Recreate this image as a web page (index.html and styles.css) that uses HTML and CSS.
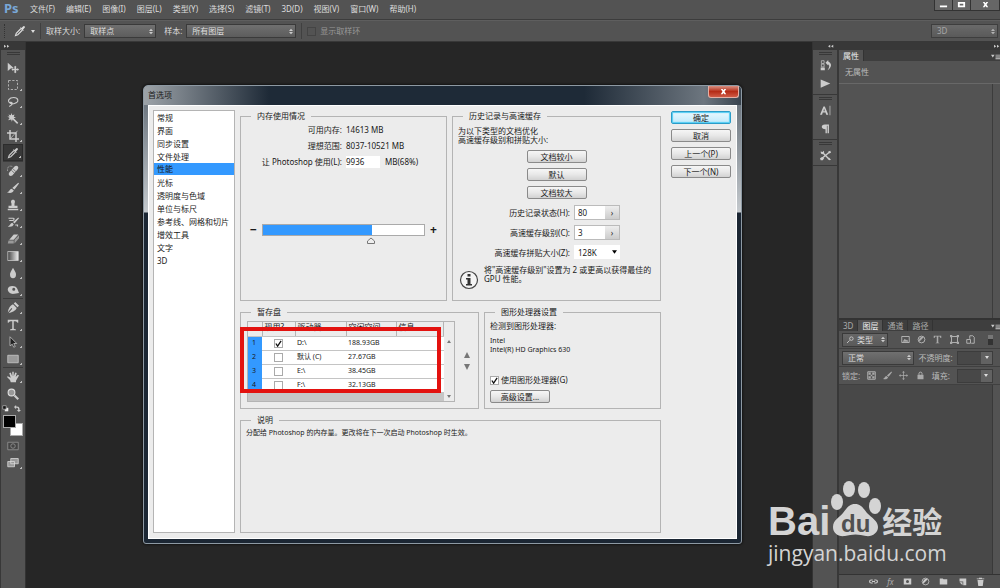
FILE: index.html
```html
<!DOCTYPE html>
<html lang="zh-CN">
<head>
  <meta charset="utf-8">
  <meta name="viewport" content="width=device-width, initial-scale=1">
  <title>首选项</title>
  <link rel="stylesheet" href="styles.css">
</head>
<body>
  <header class="menubar">
    <span class="logo">Ps</span>
    <nav class="menu">
      <a href="#">文件(F)</a>
      <a href="#">编辑(E)</a>
      <a href="#">图像(I)</a>
      <a href="#">图层(L)</a>
      <a href="#">类型(Y)</a>
      <a href="#">选择(S)</a>
      <a href="#">滤镜(T)</a>
      <a href="#">3D(D)</a>
      <a href="#">视图(V)</a>
      <a href="#">窗口(W)</a>
      <a href="#">帮助(H)</a>
    </nav>
    <div class="window-buttons">
      <button aria-label="最小化"><svg viewBox="0 0 10 8"><path d="M1 5h8v2H1z"/></svg></button>
      <button aria-label="最大化"><svg viewBox="0 0 10 8"><path fill-rule="evenodd" d="M1 1h8v6H1zM3 3v2h4V3z"/></svg></button>
      <button class="wide" aria-label="关闭"><svg viewBox="0 0 10 8"><path d="M2 1h2l1 1.500L6 1h2L6.200 4 8 7H6L5 5.500 4 7H2l1.800-3z"/></svg></button>
    </div>
  </header>

  <div class="options">
    <span class="handle"></span>
    <svg class="option-icon" viewBox="0 0 16 16"><path fill="none" stroke="#ddd" stroke-width="1.500" d="M9 5L3 11l-1 3 3-1 6-6"/><path fill="#ddd" d="M8 4l4 4 1-1-1-1 2-2c2-2-1-4-2-2l-2 2-1-1z"/></svg>
    <span class="caret"></span>
    <span class="divider"></span>
    <label for="sample-size">取样大小:</label>
    <select id="sample-size" class="dark-select size"><option>取样点</option></select>
    <label for="sample">样本:</label>
    <select id="sample" class="dark-select sample"><option>所有图层</option></select>
    <span class="divider"></span>
    <label class="ring"><input type="checkbox" disabled>显示取样环</label>
    <select class="dark-select space" aria-label="工作区"><option>3D</option></select>
  </div>

  <div class="workspace">
    <aside class="toolbar">
      <div class="strip"><svg viewBox="0 0 8 6"><path d="M0 1l3 2-3 2zM4 1l3 2-3 2z"/></svg></div>
      <div class="grip"></div>
      <button class="tool plain" aria-label="移动"><svg viewBox="0 0 16 16"><path d="M1 1l8 7-4 .500L1 12z"/><path d="M11 5l2 2h-1v2h2V8l2 2-2 2v-1h-2v2h1l-2 2-2-2h1v-2H8v1l-2-2 2-2v1h2V7H9z"/></svg></button>
      <button class="tool" aria-label="选框"><svg viewBox="0 0 16 16"><path class="line" stroke-dasharray="3 2" d="M2 2h12v12H2z"/></svg></button>
      <button class="tool" aria-label="套索"><svg viewBox="0 0 16 16"><path class="line" stroke-width="1.500" d="M5 10C-1 7 3 2 9 2s8 6 1 8c-3 1-6 0-6-1s3-1 3 1-2 3-4 4"/></svg></button>
      <button class="tool" aria-label="魔棒"><svg viewBox="0 0 16 16"><path d="M6 0l1 3 3-1-1 3 3 1-3 1 6 6-1.500 1.500-6-6-1 3-1-3-4 1 2-3-3-2h3L2 2l3 1z"/></svg></button>
      <button class="tool" aria-label="裁剪"><svg viewBox="0 0 16 16"><path class="line" stroke-width="2" d="M4 0v12h12M0 4h12v12"/><path class="line" d="M4 12l10-11"/></svg></button>
      <button class="tool active" aria-label="吸管"><svg viewBox="0 0 16 16"><path class="line" stroke-width="1.500" d="M9 5L3 11l-1 3 3-1 6-6"/><path d="M8 4l4 4 1-1-1-1 2-2c2-2-1-4-2-2l-2 2-1-1z"/></svg></button>
      <hr>
      <button class="tool" aria-label="修复画笔"><svg viewBox="0 0 16 16"><path d="M10 2c3-3 7 1 4 4l-7 8c-3 2-6-1-4-4z"/><path class="line" stroke-dasharray="1 1" d="M7 2C1 0 0 5 1 9"/><path stroke="#555" d="M6 7l4 4M8 5l4 4"/></svg></button>
      <button class="tool" aria-label="画笔"><svg viewBox="0 0 16 16"><path d="M15 1l1 1-6 8-3-2zM6 9l3 2c-1 4-5 4-9 3 3-1 3-4 6-5z"/></svg></button>
      <button class="tool" aria-label="图章"><svg viewBox="0 0 16 16"><path d="M8 1c3 0 3 3 2 5v3h4v3H2V9h4V6C5 4 5 1 8 1zM1 13h14v2H1z"/></svg></button>
      <button class="tool" aria-label="历史画笔"><svg viewBox="0 0 16 16"><path d="M15 2l1 1-6 7-2-2zM7 9l2 2c-1 3-4 4-8 3 3-1 3-4 6-5z"/><path class="line" stroke-width="1.500" d="M2 3h6c2 0 2 2 0 3H3M11 12h3v2"/></svg></button>
      <button class="tool" aria-label="橡皮擦"><svg viewBox="0 0 16 16"><path d="M9 2h6L9 9H3z"/><path fill="#999" d="M2 10h7v4H1zM10 9l6-6v4l-6 7z"/></svg></button>
      <button class="tool" aria-label="渐变"><svg viewBox="0 0 16 16"><defs><linearGradient id="ramp"><stop offset="0" stop-color="#444"/><stop offset="1" stop-color="#eee"/></linearGradient></defs><path fill="url(#ramp)" stroke="#ccc" d="M1 2h14v12H1z"/></svg></button>
      <button class="tool" aria-label="模糊"><svg viewBox="0 0 16 16"><path d="M8 1c3 5 4 7 4 9a4 5 0 0 1-8 0c0-2 1-4 4-9z"/></svg></button>
      <button class="tool" aria-label="减淡"><svg viewBox="0 0 16 16"><path fill-rule="evenodd" d="M1 7c0-6 12-6 13 0l2 5-6 1c-5 1-9-2-9-6zm6 0a2 2 0 1 0 4 0 2 2 0 0 0-4 0z"/></svg></button>
      <hr>
      <button class="tool" aria-label="钢笔"><svg viewBox="0 0 16 16"><path d="M11 0l5 5-2 2-5-5zM8 3l5 5c-2 4-5 5-11 7l5-6-1-1-5 6C2 8 4 5 8 3z"/></svg></button>
      <button class="tool" aria-label="文字"><svg viewBox="0 0 16 16"><path d="M1 1h14v4h-1c-1-2-2-2-5-2v10l3 1v1H4v-1l3-1V3c-3 0-4 0-5 2H1z"/></svg></button>
      <button class="tool" aria-label="路径选择"><svg viewBox="0 0 16 16"><path fill="#222" stroke="#ccc" d="M4 1l9 9H9l2 4-2 1-2-4-3 2z"/></svg></button>
      <button class="tool" aria-label="矩形"><svg viewBox="0 0 16 16"><path fill="#999" stroke="#ccc" d="M1 3h14v10H1z"/></svg></button>
      <hr>
      <button class="tool" aria-label="抓手"><svg viewBox="0 0 16 16"><path d="M3 3l2-1 2 5V1h2v6l2-5 2 .500L11.500 8l3-3 1.500 1-4 7v2H5l-1-3-4-4 1-1 4 2z"/></svg></button>
      <button class="tool plain" aria-label="缩放"><svg viewBox="0 0 16 16"><circle cx="6" cy="6" r="4.500" fill="#999" stroke="#ddd" stroke-width="1.500"/><path d="M9 11l2-2 5 5-2 2z"/></svg></button>
      <div class="mini">
        <svg viewBox="0 0 10 10"><path fill="#eee" d="M4 4h5v5H4z"/><path fill="#111" stroke="#bbb" d="M1 1h5v5H1z"/></svg>
        <svg viewBox="0 0 10 10"><path d="M0 3l3-3v2c4 0 5 1 5 5h2l-3 3-3-3h2c0-3-1-3-3-3v2z"/></svg>
      </div>
      <div class="swatches">
        <span class="back"></span>
        <span class="fore"></span>
      </div>
      <button class="tool plain" aria-label="快速蒙版"><svg viewBox="0 0 16 16"><path fill="#444" stroke="#999" d="M1 3h14v10H1z"/><circle cx="8" cy="8" r="3" fill="none" stroke="#999"/></svg></button>
      <button class="tool" aria-label="屏幕模式"><svg viewBox="0 0 16 16"><path fill="#999" stroke="#ddd" d="M5 2h10v7H5zM1 6h9v7H1z"/></svg></button>
    </aside>

    <main class="canvas"></main>

    <aside class="dock">
      <div class="strip right"><svg viewBox="0 0 8 6"><path d="M3 1v4L0 3zM7 1v4L4 3z"/></svg></div>
      <div class="dock-group">
        <div class="grip"></div>
        <button aria-label="历史记录"><svg viewBox="0 0 16 16"><path class="line" d="M2 1h4v4H2zM2 6h4v4H2z"/><path d="M1 11h6v4H1zM8 4l4-4v2c6 3 5 9-1 13 3-5 3-8 1-9v2z"/></svg></button>
        <button aria-label="动作"><svg viewBox="0 0 16 16"><path d="M1 2l14 6-14 6z"/></svg></button>
      </div>
      <div class="dock-group">
        <div class="grip"></div>
        <button aria-label="字符"><svg viewBox="0 0 16 16"><path fill-rule="evenodd" d="M0 14L5 2h2l5 12H9l-1-3H4l-1 3zM5 9h2L6 5zM14 1h1v14h-1z"/></svg></button>
        <button aria-label="段落"><svg viewBox="0 0 16 16"><path d="M7 2h6v13h-2V4h-1v11H8V9C1 9 1 2 7 2z"/></svg></button>
      </div>
      <div class="dock-group last">
        <div class="grip"></div>
        <button aria-label="工具预设"><svg viewBox="0 0 16 16"><path class="line" stroke-width="2" d="M4 4l9 9M14 3L3 12"/><path d="M1 2l3 1 1-2c2 2 1 5-1 5S1 5 1 2zM12 2l3-1 1 3-3 1zM0 12l3-2 3 2-2 3H1zM11 13l2-2 3 3-2 1z"/></svg></button>
      </div>
    </aside>

    <aside class="panels">
      <div class="strip right"><svg viewBox="0 0 8 6"><path d="M0 1l3 2-3 2zM4 1l3 2-3 2z"/></svg></div>
      <section class="properties">
        <div class="tabs">
          <button class="current">属性</button>
          <svg class="panel-menu" viewBox="0 0 10 6"><path d="M0 1h4L2 4zM5 1h5v1H5zM5 3h5v1H5zM5 5h5v1H5z"/></svg>
        </div>
        <p class="empty">无属性</p>
        <div class="panel-body"></div>
      </section>
      <section class="layers">
        <div class="tabs">
          <button>3D</button>
          <button class="current">图层</button>
          <button>通道</button>
          <button>路径</button>
          <svg class="panel-menu" viewBox="0 0 10 6"><path d="M0 1h4L2 4zM5 1h5v1H5zM5 3h5v1H5zM5 5h5v1H5z"/></svg>
        </div>
        <div class="layer-row filter">
          <select class="dark-select kind" aria-label="过滤"><option>类型</option></select>
          <svg viewBox="0 0 12 12"><path class="line" d="M1 2h10v8H1z"/><path d="M2 9l3-4 2 2 1-1 2 3z"/></svg>
          <svg viewBox="0 0 12 12"><circle class="line" cx="6" cy="6" r="4.500"/><path d="M9 3a4.500 4.500 0 0 0-6 6z"/></svg>
          <svg viewBox="0 0 12 12"><path d="M1 1h10v3h-1L9 2H7v8l2 1H3l2-1V2H3L2 4H1z"/></svg>
          <svg viewBox="0 0 12 12"><path class="line" d="M2 2h8v8H2z"/><path d="M0 0h3v3H0zM9 0h3v3H9zM0 9h3v3H0zM9 9h3v3H9z"/></svg>
          <svg viewBox="0 0 12 12"><path class="line" d="M5 5V1h4l2 2v8H7M1 6h5v5H1z"/></svg>
          <span class="toggle"></span>
        </div>
        <div class="layer-row">
          <select class="dark-select blend" aria-label="混合模式"><option>正常</option></select>
          <label for="opacity">不透明度:</label>
          <span class="amount"><input id="opacity" type="text"><button aria-label="不透明度选项"><i class="caret"></i></button></span>
        </div>
        <div class="layer-row lock">
          <span>锁定:</span>
          <svg viewBox="0 0 12 12"><path class="line" d="M1 1h10v10H1z"/><path d="M2 2h3v3H2zM7 2h3v3H7zM5 5h2v2H5zM2 7h3v3H2zM7 7h3v3H7z"/></svg>
          <svg viewBox="0 0 16 16"><path d="M15 1l1 1-6 8-3-2zM6 9l3 2c-1 4-5 4-9 3 3-1 3-4 6-5z"/></svg>
          <svg viewBox="0 0 12 12"><path d="M6 0l2 2H6.500v3.500H10V4l2 2-2 2V6.500H6.500V10H8l-2 2-2-2h1.500V6.500H2V8L0 6l2-2v1.500h3.500V2H4z"/></svg>
          <svg viewBox="0 0 12 12"><path d="M2 5h8v6H2z"/><path class="line" d="M4 5V3c0-2 4-2 4 0v2"/></svg>
          <label for="fill">填充:</label>
          <span class="amount"><input id="fill" type="text"><button aria-label="填充选项"><i class="caret"></i></button></span>
        </div>
        <div class="layer-list"></div>
        <footer class="layer-actions">
          <svg viewBox="0 0 12 12"><path class="line" stroke-width="1.500" d="M5 4H3c-3 0-3 4 0 4h2M7 4h2c3 0 3 4 0 4H7M4 6h4"/></svg>
          <i>fx</i>
          <svg viewBox="0 0 12 12"><path fill-rule="evenodd" d="M1 2h10v8H1zM4 6a2 2 0 1 0 4 0 2 2 0 0 0-4 0z"/></svg>
          <svg viewBox="0 0 12 12"><circle class="line" cx="6" cy="6" r="4.500"/><path d="M9 3a4.500 4.500 0 0 0-6 6z"/></svg>
          <svg viewBox="0 0 12 12"><path d="M1 2h4l1 1h5v7H1z"/></svg>
          <svg viewBox="0 0 12 12"><path d="M2 2h9v9H7V6H2z"/><path d="M2 7h4v4z"/></svg>
          <svg viewBox="0 0 12 12"><path d="M4 1h4v1h3v1H1V2h3zM2 4h8l-1 8H3z"/></svg>
        </footer>
      </section>
    </aside>
  </div>

  <div class="prefs" role="dialog" aria-labelledby="prefs-title">
    <div class="titlebar">
      <span id="prefs-title">首选项</span>
      <button class="close" aria-label="关闭"><svg viewBox="0 0 10 8"><path d="M2 1h2l1 1.500L6 1h2L6.200 4 8 7H6L5 5.500 4 7H2l1.800-3z"/></svg></button>
    </div>
    <div class="prefs-body">
      <ul class="sections">
        <li>常规</li>
        <li>界面</li>
        <li>同步设置</li>
        <li>文件处理</li>
        <li class="selected">性能</li>
        <li>光标</li>
        <li>透明度与色域</li>
        <li>单位与标尺</li>
        <li>参考线、网格和切片</li>
        <li>增效工具</li>
        <li>文字</li>
        <li>3D</li>
      </ul>

      <div class="groups">
        <div class="row top">
          <fieldset class="memory">
            <legend>内存使用情况</legend>
            <div class="pairs">
              <span>可用内存:</span><span>14613 MB</span>
              <span>理想范围:</span><span>8037-10521 MB</span>
              <label for="usage">让 Photoshop 使用(L):</label>
              <span class="usage"><input id="usage" type="text" value="9936">MB(68%)</span>
            </div>
            <div class="slider">
              <b>−</b>
              <input type="range" min="0" max="100" value="68" aria-label="内存使用">
              <b>+</b>
            </div>
          </fieldset>
          <fieldset class="history">
            <legend>历史记录与高速缓存</legend>
            <p>为以下类型的文档优化<br>高速缓存级别和拼贴大小:</p>
            <div class="presets">
              <button class="btn">文档较小</button>
              <button class="btn">默认</button>
              <button class="btn">文档较大</button>
            </div>
            <div class="fields">
              <label for="states">历史记录状态(H):</label>
              <span class="stepper"><input id="states" type="text" value="80"><button aria-label="历史记录状态选项">›</button></span>
              <label for="levels">高速缓存级别(C):</label>
              <span class="stepper"><input id="levels" type="text" value="3"><button aria-label="高速缓存级别选项">›</button></span>
              <label for="tile">高速缓存拼贴大小(Z):</label>
              <select id="tile"><option>128K</option></select>
            </div>
            <div class="note">
              <svg viewBox="0 0 20 20"><circle cx="10" cy="10" r="8.500" fill="#f4f4f4" stroke="#444" stroke-width="1.200"/><path fill="#333" d="M8.500 4h3v2.500h-3zM7 8h4.500v6H13v1.500H7V14h1.500V9.500H7z"/></svg>
              <p>将"高速缓存级别"设置为 2 或更高以获得最佳的<br>GPU 性能。</p>
            </div>
          </fieldset>
        </div>

        <div class="row middle">
          <fieldset class="scratch">
            <legend>暂存盘</legend>
            <div class="disks">
              <table>
                <thead>
                  <tr><th class="num"></th><th class="use">现用?</th><th class="drive">驱动器</th><th class="free">空闲空间</th><th>信息</th></tr>
                </thead>
                <tbody>
                  <tr><td>1</td><td><input type="checkbox" aria-label="D:\" checked></td><td>D:\</td><td>188.93GB</td><td></td></tr>
                  <tr><td>2</td><td><input type="checkbox" aria-label="默认 (C)"></td><td>默认 (C)</td><td>27.67GB</td><td></td></tr>
                  <tr><td>3</td><td><input type="checkbox" aria-label="E:\"></td><td>E:\</td><td>38.45GB</td><td></td></tr>
                  <tr><td>4</td><td><input type="checkbox" aria-label="F:\"></td><td>F:\</td><td>32.13GB</td><td></td></tr>
                </tbody>
              </table>
              <div class="scroll"><i class="up"></i><i class="down"></i></div>
              <span class="marker"></span>
            </div>
            <div class="order">
              <button aria-label="上移"><i class="up"></i></button>
              <button aria-label="下移"><i class="down"></i></button>
            </div>
          </fieldset>
          <fieldset class="gpu">
            <legend>图形处理器设置</legend>
            <p>检测到图形处理器:</p>
            <p class="card">Intel<br>Intel(R) HD Graphics 630</p>
            <label><input type="checkbox" checked>使用图形处理器(G)</label>
            <button class="btn">高级设置...</button>
          </fieldset>
        </div>

        <fieldset class="about">
          <legend>说明</legend>
          <p>分配给 Photoshop 的内存量。更改将在下一次启动 Photoshop 时生效。</p>
        </fieldset>
      </div>

      <div class="actions">
        <button class="btn primary">确定</button>
        <button class="btn">取消</button>
        <button class="btn">上一个(P)</button>
        <button class="btn">下一个(N)</button>
      </div>
    </div>
  </div>

  <div class="watermark">
    <div class="brand">
      <span class="bai">Bai</span>
      <svg viewBox="0 0 52 56">
        <ellipse cx="7" cy="21" rx="6" ry="8"/>
        <ellipse cx="19" cy="8" rx="6" ry="8"/>
        <ellipse cx="34" cy="9" rx="6" ry="8"/>
        <ellipse cx="45" cy="25" rx="6" ry="8"/>
        <path d="M25 23c6 0 8 4 12 9 5 5 11 8 11 14s-6 10-12 9c-7-2-14-2-21 0-7 1-12-3-12-9 0-7 6-9 10-14s6-9 12-9z"/>
        <text x="11" y="51">du</text>
      </svg>
      <span class="jingyan">经验</span>
    </div>
    <div class="site">jingyan.baidu.com</div>
  </div>
</body>
</html>
```

FILE: styles.css
```css
* {
  box-sizing: border-box;
}

body {
  display: flex;
  flex-direction: column;
  height: 100vh;
  margin: 0;
  overflow: hidden;
  font-family: "Noto Sans", "Noto Sans CJK SC", sans-serif;
  font-size: 8px;
  line-height: 12px;
  color: #ddd;
  background-color: #535353;
}

button, input, select {
  margin: 0;
  padding: 0;
  font: inherit;
  color: inherit;
  border: 0;
  border-radius: 0;
  background: none;
}

p, ul {
  margin: 0;
  padding: 0;
  list-style: none;
}

a {
  color: inherit;
  text-decoration: none;
}

svg {
  display: block;
  flex: none;
  fill: #ccc;
}

.line {
  fill: none;
  stroke: #ccc;
}

/* menu and options */
.menubar {
  display: flex;
  flex: none;
  height: 20px;
  padding-left: 4px;
  border-bottom: 1px solid #3c3c3c;
}

.logo {
  width: 26px;
  font-size: 13px;
  font-weight: bold;
  line-height: 16px;
  color: #79a8d8;
}

.menu {
  display: flex;
  flex: 1;
  gap: 11px;
  line-height: 18px;
  white-space: nowrap;
}

.window-buttons {
  display: flex;
  height: 11px;
  border: 1px solid #333;
  border-top: 0;
}

.window-buttons button {
  display: flex;
  justify-content: center;
  align-items: center;
  width: 18px;
  border-right: 1px solid #333;
  background-color: #666;
}

.window-buttons .wide {
  width: 28px;
  border: 0;
}

.window-buttons svg {
  width: 9px;
  fill: #fff;
}

.options {
  display: flex;
  flex: none;
  align-items: center;
  height: 22px;
  padding: 0 2px 0 4px;
  border-top: 1px solid #5e5e5e;
  border-bottom: 1px solid #383838;
}

.options label {
  margin-right: 4px;
}

.handle {
  width: 2px;
  height: 14px;
  border-left: 1px dotted #333;
}

.option-icon {
  width: 12px;
  margin: 0 5px 0 8px;
}

.caret {
  width: 0;
  height: 0;
  border: 2px solid transparent;
  border-top: 3px solid #ddd;
  border-bottom: 0;
}

.divider {
  width: 1px;
  height: 16px;
  margin: 0 5px;
  background-color: #404040;
}

.dark-select {
  height: 14px;
  padding: 0 5px;
  border: 1px solid #3a3a3a;
  appearance: none;
  color: #ddd;
  background: url("data:image/svg+xml,%3Csvg xmlns='http://www.w3.org/2000/svg' viewBox='0 0 5 7'%3E%3Cpath fill='%23ccc' d='M0 3l2.500-3L5 3zM0 4h5L2.500 7z'/%3E%3C/svg%3E") no-repeat right 2px center / 4px 7px, linear-gradient(#707070, #5c5c5c);
}

.size {
  width: 72px;
  margin-right: 8px;
}

.sample {
  width: 110px;
}

.ring {
  display: flex;
  align-items: center;
  gap: 4px;
  color: #999;
}

.ring input {
  width: 9px;
  height: 9px;
  border: 1px solid #444;
  appearance: none;
}

.space {
  width: 67px;
  margin-left: auto;
  color: #bbb;
  opacity: .8;
}

/* workspace */
.workspace {
  display: flex;
  flex: 1;
  min-height: 0;
}

.strip {
  display: flex;
  flex: none;
  align-items: center;
  height: 8px;
  padding: 0 3px;
  background-color: #383838;
}

.strip.right {
  justify-content: flex-end;
}

.strip svg {
  width: 6px;
}

.grip {
  flex: none;
  width: 13px;
  height: 3px;
  margin: 2px auto 4px;
  border-top: 1px solid #383838;
  border-bottom: 1px solid #383838;
}

.toolbar {
  display: flex;
  flex: none;
  flex-direction: column;
  width: 26px;
  border-left: 1px solid #383838;
  border-right: 1px solid #333;
}

.toolbar hr {
  width: 20px;
  height: 1px;
  margin: 0 auto;
  border: 0;
  background-color: #3c3c3c;
}

.tool {
  display: flex;
  flex: none;
  justify-content: center;
  align-items: center;
  width: 20px;
  height: 17px;
  margin: 0 auto;
  background: linear-gradient(135deg, transparent 50%, #bbb 50%) no-repeat right 1px bottom 2px / 2px 2px;
}

.tool.plain {
  background: none;
}

.tool.active {
  border: 1px solid #2c2c2c;
  background-color: #383838;
}

.tool svg {
  width: 12px;
  height: 12px;
}

.mini {
  display: flex;
  justify-content: space-between;
  height: 8px;
  margin: 3px 4px 2px 1px;
}

.mini svg {
  width: 7px;
  height: 7px;
}

.swatches {
  position: relative;
  flex: none;
  width: 20px;
  height: 21px;
  margin: 0 auto 1px;
}

.fore, .back {
  position: absolute;
  width: 13px;
  height: 13px;
  border: 1px solid #aaa;
}

.fore {
  top: 0;
  left: 0;
  background-color: #000;
}

.back {
  right: 0;
  bottom: 0;
  background-color: #fff;
}

.canvas {
  flex: 1;
  background-color: #262626;
}

.dock {
  display: flex;
  flex: none;
  flex-direction: column;
  width: 27px;
  border-left: 1px solid #333;
  border-right: 2px solid #383838;
}

.dock-group {
  display: flex;
  flex-direction: column;
  align-items: center;
  height: 45px;
  border-bottom: 1px solid #383838;
}

.dock-group.last {
  height: 26px;
}

.dock-group button {
  display: flex;
  align-items: center;
  height: 18px;
}

.dock-group .grip {
  margin-bottom: 1px;
}

.dock-group svg {
  width: 11px;
  height: 11px;
}

.panels {
  display: flex;
  flex: none;
  flex-direction: column;
  width: 161px;
}

.panels .strip {
  padding-right: 0;
}

.tabs {
  display: flex;
  height: 11px;
  background-color: #3e3e3e;
}

.tabs button {
  padding: 0 4px;
  line-height: 11px;
  color: #aaa;
  border-right: 1px solid #333;
}

.tabs .current {
  color: #eee;
  background-color: #535353;
}

.panel-menu {
  width: 9px;
  margin: 2px 0 0 auto;
}

.properties {
  display: flex;
  flex: none;
  flex-direction: column;
  height: 268px;
}

.empty {
  height: 23px;
  padding-left: 6px;
  line-height: 22px;
  color: #bbb;
  border-bottom: 1px solid #686868;
}

.panel-body {
  flex: 1;
  margin-right: 7px;
  border-right: 1px solid #3c3c3c;
}

.layers {
  display: flex;
  flex: 1;
  flex-direction: column;
  min-height: 0;
  border-top: 2px solid #333;
}

.layer-row {
  display: flex;
  flex: none;
  align-items: center;
  justify-content: space-between;
  height: 18px;
  padding: 0 7px 0 3px;
  border-bottom: 1px solid #404040;
  color: #bbb;
}

.layer-row svg {
  width: 9px;
  height: 9px;
  fill: #aaa;
}

.kind {
  width: 46px;
  padding-left: 14px;
  margin-right: 6px;
  background: url("data:image/svg+xml,%3Csvg xmlns='http://www.w3.org/2000/svg' viewBox='0 0 8 8'%3E%3Cpath fill='none' stroke='%23ccc' d='M0 8l3-3M3 3a2 2 0 1 0 4 0 2 2 0 0 0-4 0z'/%3E%3C/svg%3E") no-repeat 4px center / 7px 7px, url("data:image/svg+xml,%3Csvg xmlns='http://www.w3.org/2000/svg' viewBox='0 0 5 7'%3E%3Cpath fill='%23ccc' d='M0 3l2.500-3L5 3zM0 4h5L2.500 7z'/%3E%3C/svg%3E") no-repeat right 2px center / 4px 7px, linear-gradient(#666, #5a5a5a);
}

.toggle {
  width: 5px;
  height: 10px;
  margin-left: 6px;
  border-top: 4px solid #777;
  background-color: #333;
}

.blend {
  width: 72px;
}

.amount {
  display: flex;
  width: 36px;
  height: 14px;
  border: 1px solid #3c3c3c;
}

.amount input {
  width: 23px;
  background-color: #484848;
}

.amount button {
  display: flex;
  flex: 1;
  justify-content: center;
  align-items: center;
  background-color: #626262;
}

.layer-list {
  flex: 1;
  margin-right: 7px;
  border-right: 1px solid #393939;
  background-color: #484848;
}

.layer-actions {
  display: flex;
  flex: none;
  justify-content: space-between;
  align-items: center;
  height: 14px;
  padding: 0 15px 0 30px;
  border-top: 1px solid #333;
  color: #aaa;
}

.layer-actions svg {
  width: 9px;
  height: 9px;
}

/* preferences window */
.prefs {
  position: absolute;
  top: 85px;
  left: 143px;
  width: 599px;
  padding: 0 4px 4px;
  border: 1px solid #8d99a3;
  border-radius: 5px 5px 3px 3px;
  color: #1a1a1a;
  background: linear-gradient(#6f7881 20px, #c4c9cd 126px, #1b2633 127px);
  box-shadow: 0 0 3px #000;
}

.titlebar {
  display: flex;
  justify-content: space-between;
  height: 19px;
  margin: 0 -4px;
  padding-left: 4px;
  border-radius: 4px 4px 0 0;
  background: linear-gradient(90deg, #9da3a8, #757d85 40px, #1e2a37 125px, #1e2a37 440px, #6d767f 560px, #38434e);
}

.titlebar span {
  line-height: 17px;
}

.close {
  display: flex;
  justify-content: center;
  align-items: center;
  width: 31px;
  height: 12px;
  margin-right: 2px;
  border: 1px solid #e4b0a5;
  border-top: 0;
  border-radius: 0 0 3px 3px;
  background: linear-gradient(#d99082, #b52c17 50%, #cf5a45);
}

.close svg {
  width: 9px;
  fill: #fff;
}

.prefs-body {
  display: flex;
  height: 434px;
  padding: 4px 5px 5px 4px;
  background-color: #ececec;
  border: 1px solid #fff;
}

.sections {
  width: 82px;
  margin-right: 5px;
  line-height: 13px;
  border: 1px solid #b4b4b4;
  background-color: #fff;
}

.sections li {
  padding-left: 3px;
  white-space: nowrap;
}

.sections .selected {
  height: 12px;
  line-height: 12px;
  margin-bottom: 1px;
  background-color: #3399ff;
}

.groups {
  display: flex;
  flex: 1;
  flex-direction: column;
  gap: 5px;
}

.row {
  display: flex;
  gap: 5px;
}

fieldset {
  min-width: 0;
  margin: 0;
  padding: 0;
  border: 1px solid #b4b4b4;
}

legend {
  height: 12px;
  margin-left: 10px;
  padding: 0 6px;
}

.top {
  height: 191px;
}

.middle {
  height: 103px;
}

.memory {
  width: 207px;
}

.history, .gpu, .about {
  flex: 1;
}

.pairs {
  display: grid;
  grid-template-columns: 101px 1fr;
  gap: 4px;
  padding-top: 2px;
}

.pairs > :nth-child(odd) {
  text-align: right;
  white-space: nowrap;
}

.usage input {
  width: 34px;
  height: 12px;
  margin-right: 5px;
  background-color: #fff;
}

.slider {
  display: flex;
  justify-content: center;
  align-items: center;
  gap: 5px;
  margin-top: 56px;
  font-size: 12px;
}

.slider input {
  width: 163px;
  height: 12px;
  appearance: none;
}

.slider input::-webkit-slider-runnable-track {
  height: 12px;
  border: 1px solid #aaa;
  background: linear-gradient(90deg, #3399ff 68%, #fff 68%);
}

.slider input::-webkit-slider-thumb {
  width: 8px;
  height: 7px;
  margin-top: 12px;
  appearance: none;
  background: url("data:image/svg+xml,%3Csvg xmlns='http://www.w3.org/2000/svg' viewBox='0 0 8 7'%3E%3Cpath fill='%23eee' stroke='%23777' d='M4 1l3.500 3v2.500h-7V4z'/%3E%3C/svg%3E") no-repeat;
}

.history p, .card {
  line-height: 9px;
}

.history > p {
  padding: 4px 5px 0;
}

.btn {
  width: 60px;
  height: 13px;
  line-height: 11px;
  border: 1px solid #8a8a8a;
  border-radius: 2px;
  background: linear-gradient(#f6f6f6, #e8e8e8 50%, #d2d2d2);
}

.btn.primary {
  border-color: #2c9cc8;
  background: linear-gradient(#eaf8fe, #c0eafb);
  box-shadow: inset 0 0 1px 1px #52cdf3;
}

.presets {
  display: flex;
  flex-direction: column;
  align-items: center;
  gap: 5px;
  padding: 6px 0;
}

.fields {
  display: grid;
  grid-template-columns: 117px 46px;
  gap: 5px 4px;
  line-height: 15px;
}

.fields label {
  text-align: right;
}

.stepper {
  display: flex;
  height: 15px;
  border: 1px solid #bbb;
}

.stepper input {
  width: 30px;
  padding-left: 3px;
  background-color: #fff;
}

.stepper button {
  flex: 1;
  line-height: 10px;
  background: linear-gradient(#eee, #ccc);
}

.fields select {
  height: 14px;
  padding-left: 4px;
  appearance: none;
  background: #fff url("data:image/svg+xml,%3Csvg xmlns='http://www.w3.org/2000/svg' viewBox='0 0 6 4'%3E%3Cpath d='M0 0h6L3 4z'/%3E%3C/svg%3E") no-repeat right 3px center / 5px 4px;
}

.note {
  display: flex;
  gap: 5px;
  padding: 5px 6px;
  white-space: nowrap;
}

.note svg {
  width: 20px;
  height: 20px;
  margin-top: 5px;
}

.scratch {
  width: 239px;
}

.disks {
  position: relative;
  float: left;
  display: flex;
  width: 208px;
  height: 81px;
  margin: 3px 0 0 6px;
  border: 1px solid #b4b4b4;
  background-color: #c6c6c6;
}

.disks table {
  flex: 1;
  align-self: flex-start;
  border-collapse: collapse;
  table-layout: fixed;
}

.disks th, .disks td {
  height: 14px;
  padding: 0 0 0 2px;
  overflow: hidden;
  font-size: 7px;
  line-height: 12px;
  text-align: left;
  white-space: nowrap;
  border-bottom: 1px solid #c4c4c4;
  background-color: #fff;
}

.disks th {
  font-size: 8px;
  font-weight: normal;
  line-height: 9px;
  vertical-align: top;
  border-right: 1px solid #b4b4b4;
  background-color: #ececec;
}

.disks td:first-child {
  padding-left: 4px;
  background-color: #3399ff;
  border-bottom-color: #3399ff;
}

.disks td:nth-child(2) {
  padding: 0;
  text-align: center;
}

.num {
  width: 14px;
}

.use {
  width: 33px;
}

.drive {
  width: 51px;
}

.free {
  width: 50px;
}

.disks input, .gpu input {
  width: 9px;
  height: 9px;
  border: 1px solid #aaa;
  appearance: none;
  vertical-align: middle;
  background: #fff;
}

.disks input:checked, .gpu input:checked {
  background: #fff url("data:image/svg+xml,%3Csvg xmlns='http://www.w3.org/2000/svg' viewBox='0 0 8 8'%3E%3Cpath fill='none' stroke='%23111' stroke-width='1.500' d='M1 4l2 3 4-6'/%3E%3C/svg%3E") no-repeat center / 7px 7px;
}

.scroll {
  display: flex;
  flex-direction: column;
  justify-content: space-between;
  align-items: center;
  width: 10px;
  padding: 18px 0 3px;
  background-color: #ececec;
}

.up, .down {
  display: block;
  border: 2px solid transparent;
}

.up {
  border-top: 0;
  border-bottom: 3px solid #777;
}

.down {
  border-bottom: 0;
  border-top: 3px solid #777;
}

/* frame drawn over the disk rows */
.marker {
  position: absolute;
  top: 5px;
  left: -8px;
  width: 201px;
  height: 66px;
  border: 4px solid #e3120f;
}

.order {
  display: flex;
  flex-direction: column;
  align-items: center;
  gap: 6px;
  padding-top: 34px;
}

.order .up, .order .down {
  border-left-width: 3px;
  border-right-width: 3px;
}

.order .up {
  border-bottom-width: 6px;
}

.order .down {
  border-top-width: 6px;
}

.gpu p, .gpu label {
  padding-left: 5px;
}

.gpu p {
  padding-top: 2px;
}

.gpu .card {
  height: 42px;
  padding-top: 4px;
  font-size: 7px;
}

.gpu label {
  display: flex;
  align-items: center;
  gap: 2px;
}

.gpu .btn {
  display: block;
  margin: 4px 0 0 5px;
}

.about p {
  padding: 1px 5px;
  font-size: 7px;
}

.actions {
  display: flex;
  flex-direction: column;
  gap: 5px;
  margin-left: 10px;
  padding-top: 1px;
}

/* watermark */
.watermark {
  position: absolute;
  right: 55px;
  bottom: 21px;
  width: 177px;
  color: #d4d4d4;
}

.brand {
  display: flex;
  align-items: flex-end;
  height: 56px;
  margin-bottom: 2px;
}

.bai {
  font-family: "Liberation Sans", sans-serif;
  font-size: 40px;
  font-weight: bold;
  line-height: 32px;
}

.brand svg {
  width: 52px;
  height: 56px;
  fill: #d4d4d4;
  overflow: visible;
}

.brand text {
  font-family: "Liberation Sans", sans-serif;
  font-size: 24px;
  font-weight: bold;
  fill: #505050;
}

.jingyan {
  font-family: "Noto Sans CJK SC", sans-serif;
  font-size: 30px;
  font-weight: bold;
  line-height: 34px;
}

.site {
  font-family: "Open Sans", sans-serif;
  font-size: 21px;
  line-height: 28px;
  white-space: nowrap;
}
```
